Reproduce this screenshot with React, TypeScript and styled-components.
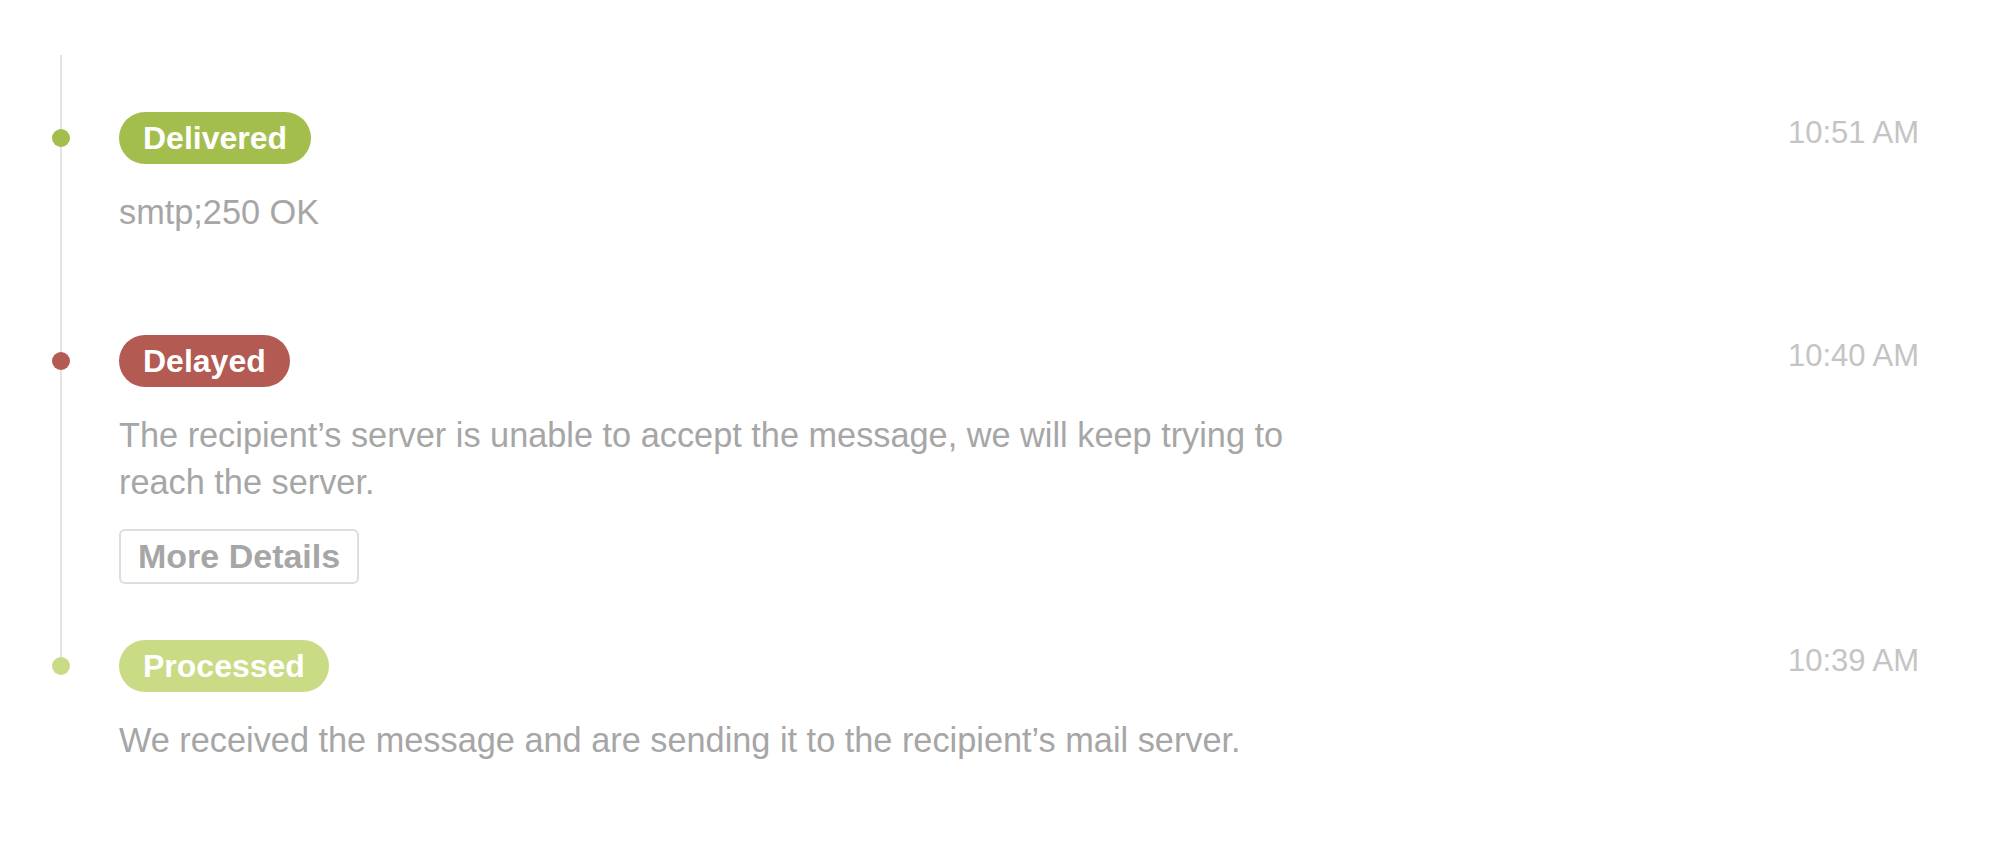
import React from "react";
import styled, { createGlobalStyle } from "styled-components";

const GlobalStyle = createGlobalStyle`
  html, body {
    margin: 0;
    padding: 0;
    background: #ffffff;
  }
  body {
    font-family: "Liberation Sans", Arial, Helvetica, sans-serif;
  }
`;

const Page = styled.div`
  padding: 55px 80px 0 0;
  background: #ffffff;
`;

const Timeline = styled.div`
  position: relative;
  padding-top: 57px;
  &::before {
    content: "";
    position: absolute;
    left: 60px;
    top: 0;
    bottom: 98px;
    width: 2px;
    background: #e4e4e4;
  }
`;

const Item = styled.div<{ $pad: number }>`
  position: relative;
  display: flex;
  align-items: flex-start;
  padding-bottom: ${(p) => p.$pad}px;
`;

const Rail = styled.div`
  width: 119px;
  flex-shrink: 0;
  height: 52px;
  display: flex;
  align-items: center;
  padding-left: 52px;
  box-sizing: border-box;
`;

const Dot = styled.span<{ $color: string }>`
  width: 18px;
  height: 18px;
  border-radius: 50%;
  background: ${(p) => p.$color};
`;

const Content = styled.div`
  flex: 1;
  min-width: 0;
`;

const Badge = styled.span<{ $color: string }>`
  display: inline-flex;
  align-items: center;
  height: 52px;
  padding: 0 24px;
  border-radius: 26px;
  background: ${(p) => p.$color};
  color: #ffffff;
  font-weight: 700;
  font-size: 32px;
  line-height: 1;
`;

const Description = styled.p`
  margin: 25px 0 0;
  max-width: 1200px;
  font-size: 34.3px;
  line-height: 47.6px;
  color: #a6a6a6;
`;

const DetailsButton = styled.button`
  display: inline-flex;
  align-items: center;
  margin-top: 22px;
  height: 55px;
  padding: 0 17px;
  border: 2px solid #dedede;
  border-radius: 6px;
  background: #ffffff;
  font-family: "Liberation Sans", Arial, Helvetica, sans-serif;
  font-weight: 700;
  font-size: 34px;
  color: #a6a6a6;
  cursor: pointer;
`;

const Time = styled.div`
  flex-shrink: 0;
  font-size: 31px;
  line-height: 42px;
  color: #c4c4c4;
`;

type Event = {
  label: string;
  color: string;
  time: string;
  text: string;
  details?: boolean;
  pad: number;
};

const events: Event[] = [
  {
    label: "Delivered",
    color: "#a3be4d",
    time: "10:51 AM",
    text: "smtp;250 OK",
    pad: 98,
  },
  {
    label: "Delayed",
    color: "#b35a52",
    time: "10:40 AM",
    text:
      "The recipient\u2019s server is unable to accept the message, we will keep trying to reach the server.",
    details: true,
    pad: 56,
  },
  {
    label: "Processed",
    color: "#c9db85",
    time: "10:39 AM",
    text:
      "We received the message and are sending it to the recipient\u2019s mail server.",
    pad: 0,
  },
];

export default function App() {
  return (
    <>
      <GlobalStyle />
      <Page>
        <Timeline>
          {events.map((e) => (
            <Item key={e.label} $pad={e.pad}>
              <Rail>
                <Dot $color={e.color} />
              </Rail>
              <Content>
                <Badge $color={e.color}>{e.label}</Badge>
                <Description>{e.text}</Description>
                {e.details && <DetailsButton>More Details</DetailsButton>}
              </Content>
              <Time>{e.time}</Time>
            </Item>
          ))}
        </Timeline>
      </Page>
    </>
  );
}
